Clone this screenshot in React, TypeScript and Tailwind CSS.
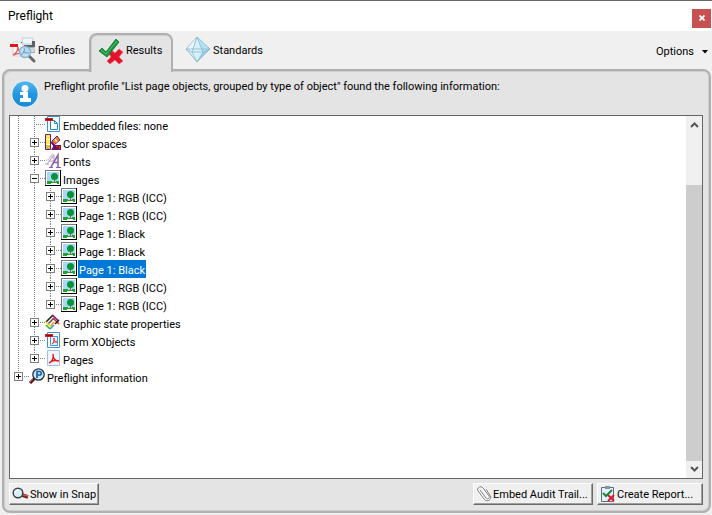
import type { ReactNode } from "react";

const dotsV =
  "bg-[repeating-linear-gradient(to_bottom,#808080_0px,#808080_1px,transparent_1px,transparent_2px)]";
const dotsH =
  "bg-[repeating-linear-gradient(to_right,#808080_0px,#808080_1px,transparent_1px,transparent_2px)]";

function ProfilesIcon() {
  return (
    <svg width="26" height="28" viewBox="0 0 26 28" aria-hidden="true">
      <path d="M12 2h11l-1 6H13z" fill="#eef6fa" stroke="#c4d0d6" />
      <path d="M10 9h14l1 8H11z" fill="#a4a8ac" />
      <path d="M10 6h2v3h10V5h3v6H10z" fill="#5c6064" />
      <path d="M19 12h5v4h-5z" fill="#d3d7da" />
      <path d="M3 6h7l4 4v10H3z" fill="#fafafa" stroke="#d4d4d4" />
      <path d="M0 8h8v3H0z" fill="#e4151b" />
      <path d="M3 19c4-2 5-6 5-8 0 4 4 6 8 7-5-1-9-1-13 1" fill="none" stroke="#ee5a5a" strokeWidth="1.4" />
      <path d="M19 20l5 5" stroke="#6a6a6a" strokeWidth="3" strokeLinecap="round" />
      <circle cx="15" cy="16" r="5.5" fill="#b9e0f6" fillOpacity=".85" stroke="#86b2d6" strokeWidth="1.4" />
      <path d="M11 19c3-2 4-4 3-7M13 15c2 2 3 2 6 2" fill="none" stroke="#5c9bd2" />
    </svg>
  );
}

function ResultsIcon() {
  return (
    <svg width="26" height="28" viewBox="0 0 26 28" aria-hidden="true">
      <path d="M9 14l3-2 5 4 4-4 4 3-4 5 4 4-4 3-4-4-5 4-3-3 4-4z" fill="#e2142d" stroke="#f2606c" strokeWidth=".7" />
      <path d="M1 14l3-3 4 4L18 2l3 3L9 20z" fill="#17963a" stroke="#0a7428" strokeWidth=".8" />
      <path d="M3 13l5 4L19 4" fill="none" stroke="#5bc270" strokeWidth="1" />
    </svg>
  );
}

function StandardsIcon() {
  return (
    <svg width="26" height="28" viewBox="0 0 26 28" aria-hidden="true">
      <path d="M12 1L1 13l11 13 13-13z" fill="#d6f1fa" />
      <path d="M12 1l6 15 7-3z" fill="#b2e3f4" />
      <path d="M18 16l7-3-13 13z" fill="#8fd3ea" />
      <path d="M12 1L1 13l6 3z" fill="#e8f8fd" />
      <path d="M12 1L1 13l11 13 13-13zM12 1L7 16l5 10 6-10zM1 13l6 3h11l7-3M1 13h24" fill="none" stroke="#8ab6c9" strokeWidth=".8" />
    </svg>
  );
}

function InfoIcon() {
  return (
    <svg width="28" height="28" viewBox="0 0 28 28" aria-hidden="true">
      <defs>
        <linearGradient id="info" x2="0" y2="1">
          <stop stopColor="#55b8ee" />
          <stop offset=".5" stopColor="#2496e0" />
          <stop offset="1" stopColor="#168ada" />
        </linearGradient>
      </defs>
      <circle cx="14" cy="14" r="13.5" fill="#f4fafd" />
      <circle cx="14" cy="14" r="12.7" fill="url(#info)" />
      <circle cx="14" cy="8.500" r="3.500" fill="#fff" />
      <path d="M9 12h8v6h3v4H9v-4h3v-3H9z" fill="#fff" />
    </svg>
  );
}

function PageShape({ children }: { children: ReactNode }) {
  return (
    <svg width="16" height="16" viewBox="0 0 16 16" aria-hidden="true">
      <path d="M2.500 .5h12v15h-12z" fill="#fff" stroke="#3994cf" />
      {children}
      <path d="M0 2h8v3H0z" fill="#d8181e" />
      <path d="M1 3.500h6" stroke="#8c0a10" />
    </svg>
  );
}

function EmbeddedIcon() {
  return (
    <PageShape>
      <path d="M5.500 4.500h4l3 3v6h-7z" fill="#fff" stroke="#2187ca" />
      <path d="M9.500 4.500v3h3" fill="none" stroke="#2187ca" />
    </PageShape>
  );
}

function FormIcon() {
  return (
    <PageShape>
      <path d="M5.500 4.500h7v9h-7z" fill="#e3f0fa" stroke="#4797d0" />
      <path d="M7 12c2-1 2-4 2-6 0 3 1 4 3 4-2 0-3 0-5 2" fill="none" stroke="#ee3026" />
    </PageShape>
  );
}

function PagesIcon() {
  return (
    <svg width="16" height="16" viewBox="0 0 16 16" aria-hidden="true">
      <path d="M2.500 .5h12v15h-12z" fill="#eef5ff" stroke="#a9bfe2" />
      <path d="M4 13c3-1 5-5 4-9 0 4 2 7 6 7-4-1-8 0-10 2" fill="none" stroke="#e3171b" strokeWidth="1.4" />
    </svg>
  );
}

function ColorIcon() {
  return (
    <svg width="16" height="16" viewBox="0 0 16 16" aria-hidden="true">
      <path d="M6 6h2l4-4 3 4-6 7H6z" fill="#fff" />
      <path d="M7 7l5-5 3 4-6 5z" fill="#e88620" stroke="#7e1670" />
      <path d="M9 11h7v5H6z" fill="#7a1150" />
      <path d="M11 12h1.500v3H11zM14 12h1v3h-1z" fill="#e23a25" />
      <path d="M10 5l2 3" stroke="#f9e3b0" strokeWidth="1.500" />
      <path d="M6 8l6 7" stroke="#4a1590" strokeWidth="1.800" />
      <path d="M.5 .5h5v15h-5z" fill="#f8ee4a" stroke="#741488" />
      <path d="M1 5.500h4M1 10.500h4" stroke="#fff" />
      <path d="M1 11h4v4H1z" fill="#cfc52b" />
    </svg>
  );
}

function FontsIcon() {
  return (
    <svg width="16" height="16" viewBox="0 0 16 16" aria-hidden="true" fill="none">
      <path d="M3 8l5-7v6M4 5h4M1 8h3" stroke="#cfc2da" />
      <path d="M2 12l7-9v8M4 9h5M0 12h4" stroke="#b39cc6" />
      <path d="M6 15l7-12v12M8 10.500h5" stroke="#8a5ea8" strokeWidth="1.500" />
      <path d="M4 15.500h4M11 15.500h5" stroke="#8a5ea8" />
    </svg>
  );
}

function ImageIcon() {
  return (
    <svg width="16" height="16" viewBox="0 0 16 16" aria-hidden="true" shapeRendering="crispEdges">
      <path d="M0 0h16v16H0z" fill="#000" />
      <path d="M0 0h15v15H0z" fill="#777" />
      <path d="M1 1h14v14H1z" fill="#fff" />
      <path d="M2 2h12v12H2z" fill="#a9d9fa" />
      <path d="M2 11h3l3 1 6-1v3H2z" fill="#20a52c" />
      <path d="M6 13h6v1H6z" fill="#fff" />
      <path d="M9 8h1v5H9z" fill="#946326" />
      <circle cx="9.500" cy="6.500" r="3.500" fill="#089336" shapeRendering="auto" />
    </svg>
  );
}

function GraphicIcon() {
  return (
    <svg width="16" height="16" viewBox="0 0 16 16" aria-hidden="true" fill="none" strokeWidth="1.600">
      <path d="M1 8l7-7" stroke="#222" />
      <path d="M7.500 1l6 6" stroke="#741c88" />
      <path d="M3 10l6-6" stroke="#555" />
      <path d="M8 4l6 6" stroke="#ee2030" />
      <path d="M1 8l5 5" stroke="#f5d91f" />
      <path d="M1 11l4 4" stroke="#36b739" />
      <path d="M5 15l4-4" stroke="#20a3dc" />
      <path d="M6 12l3-4" stroke="#f2a61d" />
      <path d="M10 10l4-4" stroke="#222" />
    </svg>
  );
}

function PreflightIcon() {
  return (
    <svg width="16" height="16" viewBox="0 0 16 16" aria-hidden="true">
      <path d="M1 15l5-5" stroke="#56151b" strokeWidth="3" />
      <path d="M1 14l3-3" stroke="#d85050" />
      <circle cx="9.500" cy="6.500" r="5.700" fill="#c9e6fa" stroke="#243240" strokeWidth="1.300" />
      <path d="M8 10V3.500h2.500a1.700 1.700 0 010 3.500H8" fill="none" stroke="#1763ad" strokeWidth="1.700" />
    </svg>
  );
}

function SnapIcon() {
  return (
    <svg width="17" height="14" viewBox="0 0 17 14" aria-hidden="true">
      <path d="M10 8l6 2" stroke="#6b2420" strokeWidth="3.500" />
      <path d="M11 8l5 1" stroke="#ce5a4d" strokeWidth="1.500" />
      <circle cx="6" cy="6" r="4.800" fill="#d8f0f7" stroke="#3d4246" strokeWidth="1.500" />
      <path d="M3 6a3 3 0 013-3" fill="none" stroke="#fff" />
    </svg>
  );
}

function ClipIcon() {
  return (
    <svg width="16" height="16" viewBox="0 0 16 16" aria-hidden="true" fill="none">
      <path d="M4 4l6 8c2 2 4 0 3-2L7 2C5-1 0 2 2 5l6 8c2 3 7 2 7-2l-5-8" stroke="#fff" strokeWidth="2.500" />
      <path d="M4 4l6 8c2 2 4 0 3-2L7 2C5-1 0 2 2 5l6 8c2 3 7 2 7-2l-5-8" stroke="#787878" />
    </svg>
  );
}

function ReportIcon() {
  return (
    <svg width="16" height="16" viewBox="0 0 16 16" aria-hidden="true">
      <path d="M1.500 1.500h12v14h-12z" fill="#e7f1fc" stroke="#596e84" />
      <path d="M5 0h5v3H5z" fill="#8394a4" />
      <path d="M3 7l3 3 6-6" fill="none" stroke="#128938" strokeWidth="2" />
      <path d="M8 9l6 6M14 9l-6 6" stroke="#d91932" strokeWidth="2" />
    </svg>
  );
}

type Row = { level: 0 | 1 | 2; label: string; icon: ReactNode; state: "none" | "plus" | "minus"; selected?: boolean; last?: boolean };

const page = (label: string, extra: Partial<Row> = {}): Row => ({ level: 2, label, icon: <ImageIcon />, state: "plus", ...extra });

const rows: Row[] = [
  { level: 1, label: "Embedded files: none", icon: <EmbeddedIcon />, state: "none" },
  { level: 1, label: "Color spaces", icon: <ColorIcon />, state: "plus" },
  { level: 1, label: "Fonts", icon: <FontsIcon />, state: "plus" },
  { level: 1, label: "Images", icon: <ImageIcon />, state: "minus" },
  page("Page 1: RGB (ICC)"),
  page("Page 1: RGB (ICC)"),
  page("Page 1: Black"),
  page("Page 1: Black"),
  page("Page 1: Black", { selected: true }),
  page("Page 1: RGB (ICC)"),
  page("Page 1: RGB (ICC)", { last: true }),
  { level: 1, label: "Graphic state properties", icon: <GraphicIcon />, state: "plus" },
  { level: 1, label: "Form XObjects", icon: <FormIcon />, state: "plus" },
  { level: 1, label: "Pages", icon: <PagesIcon />, state: "plus", last: true },
  { level: 0, label: "Preflight information", icon: <PreflightIcon />, state: "plus", last: true },
];

function Guide() {
  return (
    <span className="flex w-4 shrink-0 pl-2">
      <span className={`w-px ${dotsV}`} />
    </span>
  );
}

function TreeRow({ row }: { row: Row }) {
  return (
    <li role="treeitem" aria-level={row.level + 1} aria-selected={!!row.selected} className="flex h-[18px]">
      {row.level > 0 && <Guide />}
      {row.level > 1 && <Guide />}
      {row.state === "none" ? (
        <Guide />
      ) : (
        <span className="flex w-4 shrink-0 flex-col pl-1">
          <span className={`ml-1 h-1 w-px ${dotsV}`} />
          <button
            aria-label={`${row.state === "plus" ? "Expand" : "Collapse"} ${row.label}`}
            className="flex size-[9px] items-center justify-center border border-[#808080] bg-white"
          >
            <svg width="5" height="5" viewBox="0 0 5 5" shapeRendering="crispEdges" aria-hidden="true">
              <path d={row.state === "plus" ? "M0 2h5v1H0zM2 0h1v5H2z" : "M0 2h5v1H0z"} fill="#000" />
            </svg>
          </button>
          {!row.last && <span className={`ml-1 h-[5px] w-px ${dotsV}`} />}
        </span>
      )}
      <span className={`mt-2 h-px shrink-0 ${dotsH} ${row.state === "none" ? "-ml-2 w-[11px]" : "-ml-1 w-[7px]"}`} />
      <span className="mr-px w-4 shrink-0">{row.icon}</span>
      <span className={`px-px leading-[22px] whitespace-nowrap ${row.selected ? "bg-[#0078d7] text-white" : ""}`}>{row.label}</span>
    </li>
  );
}

function ActionButton({ icon, width, children }: { icon: ReactNode; width: string; children: ReactNode }) {
  return (
    <button
      className={`flex h-[22px] items-center gap-px border border-t-white border-r-[#696969] border-b-[#696969] border-l-white bg-[#f0f0f0] px-[2px] whitespace-nowrap shadow-[inset_-1px_-1px_0_#a0a0a0] ${width}`}
    >
      {icon}
      <span className="pt-px">{children}</span>
    </button>
  );
}

function Chevron({ down }: { down?: boolean }) {
  return (
    <svg width="9" height="7" viewBox="0 0 9 7" fill="none" stroke="#555" strokeWidth="2" aria-hidden="true">
      <path d={down ? "M1 1l3.500 3.500L8 1" : "M1 6l3.500-3.500L8 6"} />
    </svg>
  );
}

export default function App() {
  return (
    <div className="flex h-screen flex-col bg-[#f0f0f0] pb-[2px] font-[Tahoma,Roboto,sans-serif] text-[11px] leading-4 text-black">
      <header className="flex h-[31px] shrink-0 items-center justify-between border-t border-[#666] bg-white pr-px pl-2">
        <h1 className="text-[12px]">Preflight</h1>
        <button aria-label="Close" className="mt-1 flex size-[19px] items-center justify-center bg-[#c75050]">
          <svg width="6" height="6" viewBox="0 0 6 6" stroke="#fff" strokeWidth="1.700" aria-hidden="true">
            <path d="M.5 .5l5 5M5.500 .5l-5 5" />
          </svg>
        </button>
      </header>

      <nav className="flex h-[38px] shrink-0 items-start">
        <div role="tablist" className="flex">
          <button role="tab" aria-selected="false" className="mt-1 flex h-[30px] w-[89px] items-center gap-[2px] pl-[10px]">
            <ProfilesIcon />
            <span className="pt-[2px]">Profiles</span>
          </button>
          <button
            role="tab"
            aria-selected="true"
            className="relative mt-[2px] flex h-[39px] w-[84px] items-start gap-[2px] rounded-t-[8px] border-2 border-b-0 border-[#b0b0b0] bg-[#e4e4e4] pt-[2px] pl-[7px] leading-[28px] shadow-[inset_1px_1px_0_#cfcfcf]"
          >
            <ResultsIcon />
            Results
          </button>
          <button role="tab" aria-selected="false" className="mt-1 flex h-[30px] items-center gap-[2px] pl-3">
            <StandardsIcon />
            <span className="pt-[2px]">Standards</span>
          </button>
        </div>
        <button className="mt-3 ml-auto flex items-center gap-2 pr-1">
          <span className="pt-px">Options</span>
          <svg width="6" height="4" viewBox="0 0 6 4" aria-hidden="true">
            <path d="M0 0h6L3 3.500z" />
          </svg>
        </button>
      </nav>

      <main className="mr-px ml-[2px] flex min-h-0 flex-1 flex-col rounded-[8px] border-2 border-[#b0b0b0] bg-[#e4e4e4] pr-[6px] pb-[6px] pl-[5px] shadow-[inset_1px_1px_0_#cfcfcf,inset_-1px_-1px_0_#cfcfcf]">
        <div className="flex h-11 shrink-0 gap-[5px] pt-[9px] pl-[2px]">
          <InfoIcon />
          <p className="-mt-px">Preflight profile "List page objects, grouped by type of object" found the following information:</p>
        </div>

        <section className="flex min-h-0 flex-1 border border-[#666] bg-white">
          <ul role="tree" aria-label="Preflight results" className="min-w-0 flex-1 overflow-hidden">
            {rows.map((row, i) => (
              <TreeRow key={i} row={row} />
            ))}
          </ul>
          <div className="flex w-4 shrink-0 flex-col bg-[#f0f0f0]">
            <button aria-label="Scroll up" className="flex h-[17px] items-center justify-center">
              <Chevron />
            </button>
            <div className="grow-[52]" />
            <div className="grow-[275] bg-[#cdcdcd]" />
            <button aria-label="Scroll down" className="flex h-[17px] items-center justify-center">
              <Chevron down />
            </button>
          </div>
        </section>

        <footer className="flex shrink-0 gap-1 pt-1">
          <ActionButton icon={<SnapIcon />} width="min-w-[89px]">Show in Snap</ActionButton>
          <div className="flex-1" />
          <ActionButton icon={<ClipIcon />} width="min-w-[120px]">Embed Audit Trail...</ActionButton>
          <ActionButton icon={<ReportIcon />} width="min-w-[106px]">Create Report...</ActionButton>
        </footer>
      </main>
    </div>
  );
}
